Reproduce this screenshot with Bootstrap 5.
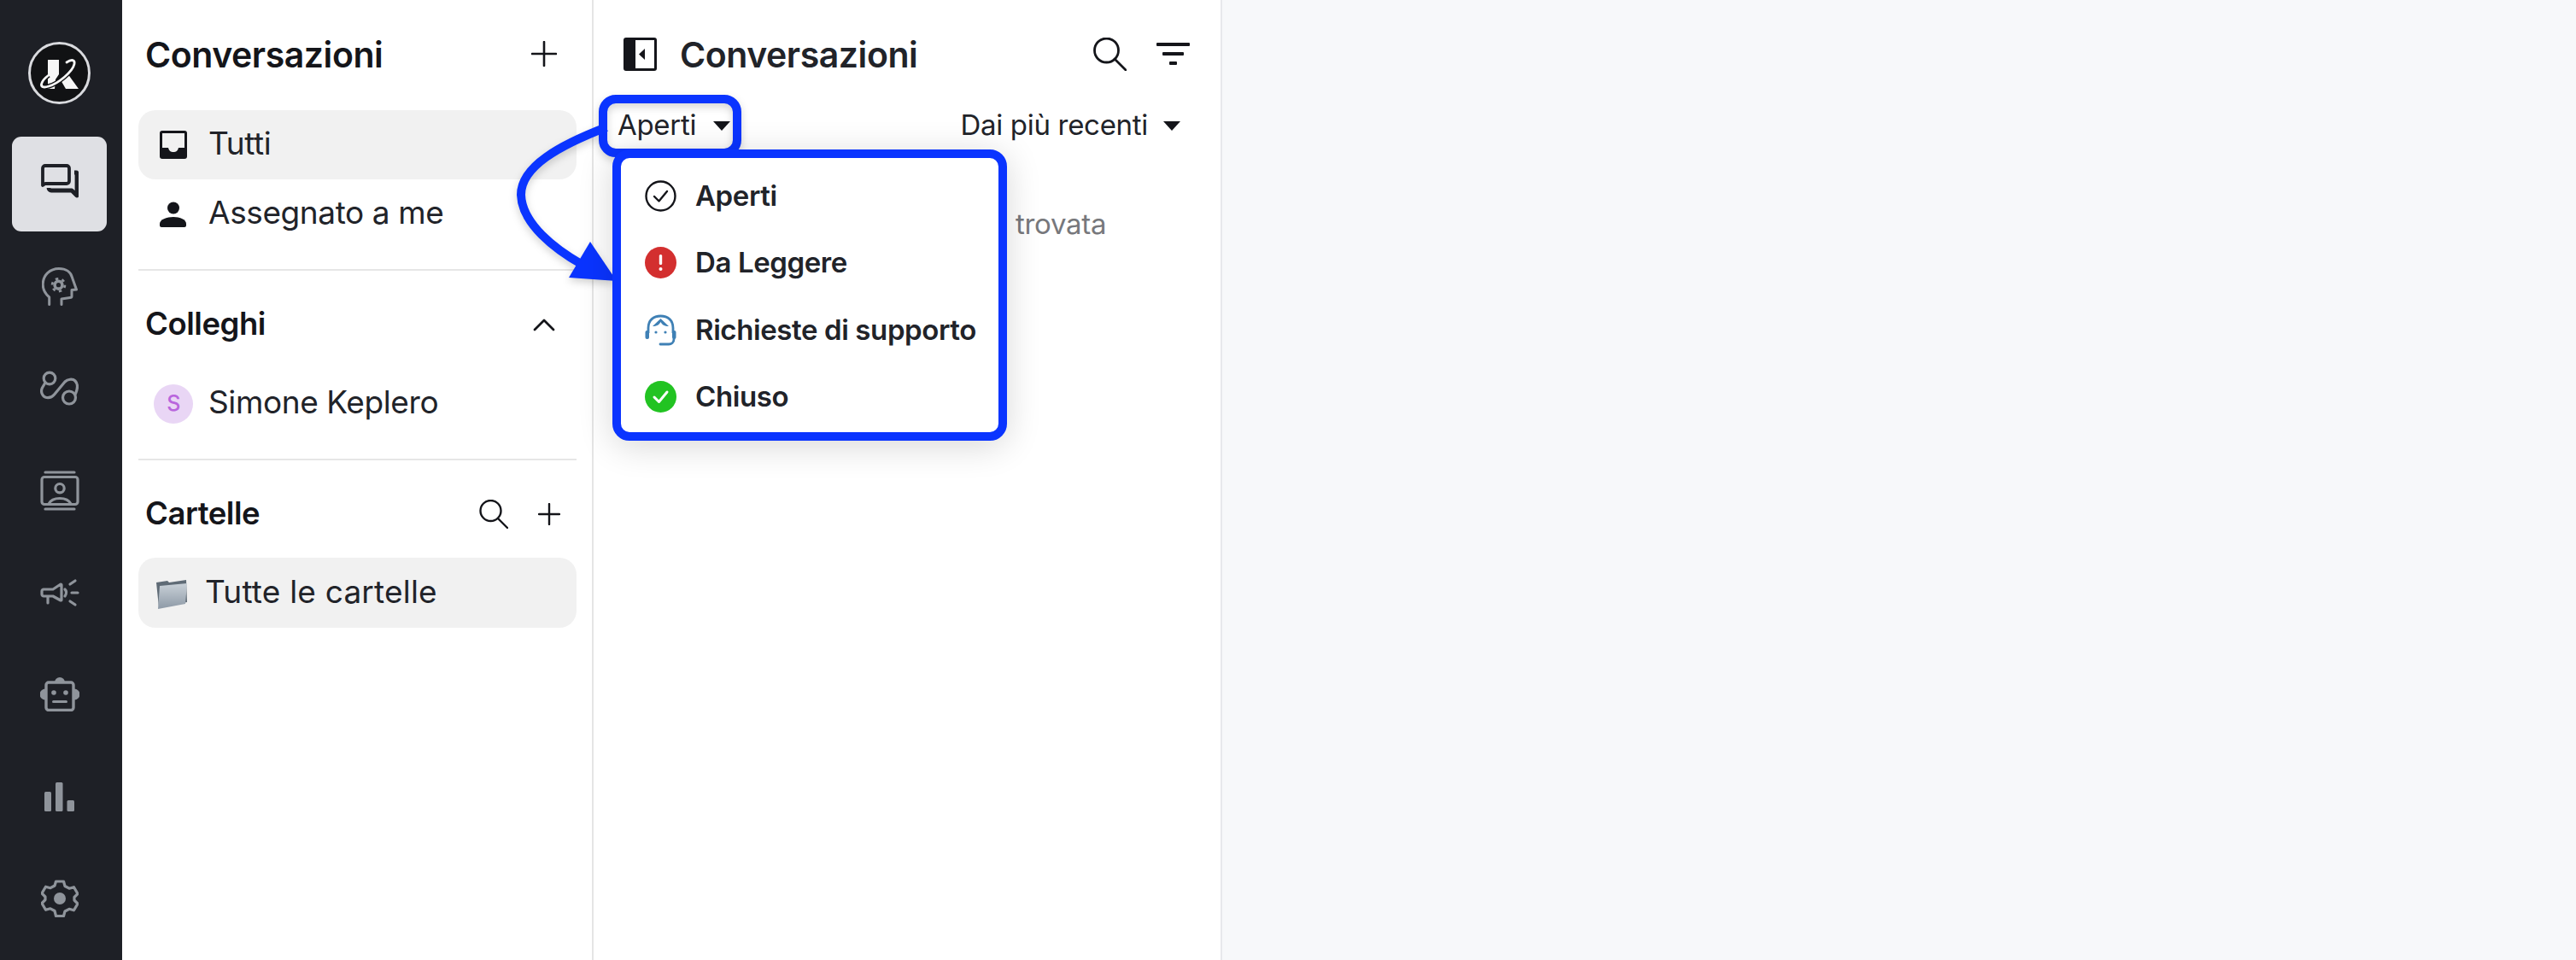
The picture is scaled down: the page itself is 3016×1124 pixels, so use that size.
<!DOCTYPE html>
<html lang="it">
<head>
<meta charset="utf-8">
<title>Conversazioni</title>
<link rel="stylesheet" href="https://cdn.jsdelivr.net/npm/bootstrap@5.3.0/dist/css/bootstrap.min.css">
<style>
html,body{height:100%;}
body{font-family:"Inter","Noto Sans",sans-serif;color:#212329;background:#fff;overflow:hidden;}
.app-shell{height:1124px;width:3016px;position:relative;}
.rail{width:143px;background:#1e2026;padding:49px 4px 0 0;flex:none;}
.rail-logo{width:73px;height:73px;margin-bottom:38px;display:block;}
.rail-btn{width:111px;height:111px;border-radius:11px;margin-bottom:8.5px;padding:0;border:0;background:transparent;color:#8f949b;display:flex;align-items:center;justify-content:center;flex:none;}
.rail-btn.on{background:#dfe0e4;color:#1e2026;}
.rail-btn.on svg{margin-bottom:6px;}
.side{width:552px;flex:none;padding:34px 18px 0 19px;border-right:2px solid #e5e5e5;}
.sec-head{height:58px;padding:0 23px 0 8px;}
.h-main{font-size:41px;font-weight:600;letter-spacing:-.45px;color:#14151a;margin:0;padding-top:2px;line-height:58px;}
.h-sec{font-size:36.5px;font-weight:600;letter-spacing:-.45px;color:#14151a;margin:0;padding-bottom:2px;line-height:56px;}
.side-row{height:81px;border-radius:20px;padding:0 0 0 25px;font-size:37px;letter-spacing:-.4px;color:#212329;gap:25px;}
.side-row > span:last-child{padding-bottom:3px;}
.side-row.sel{background:#f1f1f1;}
.side-row.folder-row{padding-left:20px;gap:21px;height:82px;letter-spacing:.2px;}
.side-div{height:2px;background:#e6e6e6;}
.avatar-s{width:46px;height:46px;border-radius:50%;background:#e9d6f5;color:#b966dd;font-size:25px;font-weight:500;margin-left:-7px;margin-right:-7px;}
.list-pane{width:736px;flex:none;padding:34px 0 0 29px;border-right:2px solid #e7e8ec;position:relative;}
.pane-title{font-weight:600;font-size:41px;letter-spacing:-.45px;color:#212329;padding-top:2px;line-height:58px;margin:0;}
.pane-head{height:58px;padding:0 36px 0 6px;}
.filter-row{height:58px;margin-top:26px;margin-left:-1px;padding-right:47px;font-size:33px;letter-spacing:-.3px;color:#212329;}
.caret-d{width:0;height:0;border-left:10px solid transparent;border-right:10px solid transparent;border-top:11px solid #14151a;display:inline-block;}
.empty-note{position:absolute;top:241px;left:494px;font-size:33px;letter-spacing:-.3px;line-height:42px;color:#77787c;}
.main-pane{background:#f7f8fa;}
.annot{position:absolute;left:0;top:0;pointer-events:none;filter:drop-shadow(0 4px 5px rgba(0,0,0,.18));}
.status-menu{display:block;position:absolute;left:717px;top:175px;width:462px;height:341px;border:10px solid #0a34ff;border-radius:20px;background:#fff;padding:5px 0 0;margin:0;box-shadow:0 6px 40px rgba(0,0,0,.16);min-width:0;}
.status-item{height:78.5px;padding:0 0 0 28px;gap:22px;font-size:33px;font-weight:600;letter-spacing:-.4px;color:#212329;}
</style>
</head>
<body>
<div class="app-shell d-flex">

  <nav class="rail d-flex flex-column align-items-center">
    <svg class="rail-logo" viewBox="0 0 73 73" aria-label="logo">
      <circle cx="36.500" cy="36.500" r="35" fill="#111214" stroke="#d9dade" stroke-width="3"/>
      <polygon points="23,21 36,21 36,38 32,44 31,55 23,55" fill="#f6f6f6"/>
      <polygon points="37,43 46,37 59,55 44,55" fill="#f6f6f6"/>
      <path d="M45 24c6-4 10-3 9 2-2 9-19 23-30 26-6 2-10 1-8-4 1-3 4-6 8-9" fill="none" stroke="#111214" stroke-width="5.500"/>
      <path d="M45 24c6-4 10-3 9 2-2 9-19 23-30 26-6 2-10 1-8-4 1-3 4-6 8-9" fill="none" stroke="#f6f6f6" stroke-width="2.800" stroke-linecap="round"/>
    </svg>

    <button class="rail-btn on btn" type="button" aria-label="Conversazioni">
      <svg width="44" height="41" viewBox="0 0 44 41" fill="none" stroke="currentColor"><path d="M2 25V5a3 3 0 0 1 3-3h25a3 3 0 0 1 3 3v15a3 3 0 0 1-3 3H5z" stroke-width="3.800" stroke-linejoin="round"/><path d="M39 10h2a1 1 0 0 1 1 1v26l-6-6H12a3 3 0 0 1-3-3" stroke-width="4.800" stroke-linejoin="round"/></svg>
    </button>
    <button class="rail-btn btn" type="button" aria-label="Base di conoscenza">
      <svg width="42" height="45" viewBox="0 0 42 45" fill="none" stroke="currentColor" stroke-width="3" stroke-linecap="round" stroke-linejoin="round"><path d="M8.700 43.500V35C4 31 1.200 26 1.200 20 1.200 9 9.500 1.500 20 1.500c8 0 14 4 15.500 10.500l5 14-5.500.5V34c0 1-1 1.500-2 1.500l-10 1.500v6.500"/><circle cx="19.500" cy="20.700" r="4.400" stroke-width="3.600"/><circle cx="19.500" cy="20.700" r="7.400" stroke-width="2.800" stroke-linecap="butt" stroke-dasharray="3.400 4.350"/></svg>
    </button>
    <button class="rail-btn btn" type="button" aria-label="Flussi">
      <svg width="45" height="41" viewBox="0 0 45 41" fill="none" stroke="currentColor" stroke-width="3.200" stroke-linecap="round" stroke-linejoin="round"><circle cx="11" cy="9" r="6.800"/><circle cx="34" cy="31.500" r="7.500"/><path d="M6 14L2.500 20c-2.500 5 .5 11 5 11.500 4 .500 7-1 9-3.500L29 13c3-3 9-4 12-1 3 3 3 9 .5 15"/></svg>
    </button>
    <button class="rail-btn btn" type="button" aria-label="Contatti">
      <svg width="46" height="47" viewBox="0 0 46 47" fill="none" stroke="currentColor" stroke-linecap="round" stroke-linejoin="round"><path d="M6 2h34M6 45h34" stroke-width="3.200"/><rect x="2" y="7.500" width="42" height="32" rx="3" stroke-width="3.200"/><circle cx="23" cy="20.700" r="5.200" stroke-width="3.200"/><path d="M10 39c2-4 7-6.500 13-6.500S34 35 36 39" stroke-width="3.200"/></svg>
    </button>
    <button class="rail-btn btn" type="button" aria-label="Campagne">
      <svg width="46" height="34" viewBox="0 0 46 34" fill="none" stroke="currentColor" stroke-width="3.200" stroke-linecap="round" stroke-linejoin="round"><path d="M2 15c0-1 1-2 2-2h11l9-6c.5 0 1 .5 1 1v17c0 .500-.500 1-1 1l-9-5H4c-1 0-2-1-2-2z"/><path d="M9 22v7M29 13c2 2 2 5 0 8" /><path d="M35 7l6-4M37 17h7M35 27l6 4"/></svg>
    </button>
    <button class="rail-btn btn" type="button" aria-label="Bot">
      <svg width="46" height="40" viewBox="0 0 46 40" fill="currentColor"><path d="M17 6a6 6 0 0 1 12 0z"/><path d="M6 13.500a6.500 6.500 0 0 0 0 13zM40 13.500a6.500 6.500 0 0 1 0 13z"/><rect x="7" y="6" width="32" height="32.500" rx="3" fill="none" stroke="currentColor" stroke-width="3.400"/><circle cx="16" cy="18" r="2.800"/><circle cx="30" cy="18" r="2.800"/><rect x="14" y="27" width="18" height="3" rx="1.500"/></svg>
    </button>
    <button class="rail-btn btn" type="button" aria-label="Statistiche">
      <svg width="35" height="34" viewBox="0 0 35 34" fill="currentColor"><rect x="0" y="11" width="8" height="23" rx="1.500"/><rect x="13" y="0" width="8.500" height="34" rx="1.500"/><rect x="26.500" y="21" width="8.500" height="13" rx="1.500"/></svg>
    </button>
    <button class="rail-btn btn" type="button" aria-label="Impostazioni">
      <svg width="44" height="44" viewBox="0 0 44 44" fill="none" stroke="currentColor" stroke-width="3.200" stroke-linejoin="round"><path d="M17.500 2h9l1.500 5.500 5 2.700 5.500-1.500 4.500 7.800-4 4v3.500l4 4-4.500 7.800-5.500-1.500-5 2.700-1.500 5.500h-9L16 36.500l-5-2.700-5.500 1.500L1 27.500l4-4V20l-4-4 4.500-7.800L11 9.700l5-2.700z"/><circle cx="22" cy="22" r="7" fill="currentColor" stroke="none"/></svg>
    </button>
  </nav>

  <aside class="side">
    <div class="sec-head d-flex align-items-center justify-content-between">
      <h1 class="h-main">Conversazioni</h1>
      <svg width="30" height="30" viewBox="0 0 30 30" stroke="#14151a" stroke-width="2.600" stroke-linecap="round"><path d="M15 1v28M1 15h28"/></svg>
    </div>
    <div class="nav flex-column" style="margin-top:37px">
      <a class="side-row sel d-flex align-items-center text-decoration-none">
        <svg width="32" height="33" viewBox="0 0 32 33"><path d="M3 0h26a3 3 0 0 1 3 3v27a3 3 0 0 1-3 3H3a3 3 0 0 1-3-3V3a3 3 0 0 1 3-3z" fill="#14151a"/><path d="M3 3h26v17h-7c-1 4-3 5-6 5s-5-1-6-5H3z" fill="#f1f1f1"/></svg>
        <span>Tutti</span>
      </a>
      <a class="side-row d-flex align-items-center text-decoration-none">
        <svg width="32" height="30" viewBox="0 0 32 30" fill="#14151a"><circle cx="16" cy="7.500" r="7"/><path d="M2 30c-1 0-2-1-2-2v-2c0-5 8-8 16-8s15 3 15 8v2c0 1-1 2-2 2z"/></svg>
        <span>Assegnato a me</span>
      </a>
    </div>
    <div class="side-div" style="margin-top:24px"></div>

    <div class="sec-head d-flex align-items-center justify-content-between" style="margin-top:34px">
      <h2 class="h-sec">Colleghi</h2>
      <svg width="26" height="16" viewBox="0 0 26 16" fill="none" stroke="#14151a" stroke-width="2.800" stroke-linecap="round" stroke-linejoin="round" style="margin-right:2px"><path d="M2 14L13 3l11 11"/></svg>
    </div>
    <a class="side-row d-flex align-items-center text-decoration-none" style="margin-top:23px">
      <span class="avatar-s d-flex align-items-center justify-content-center flex-none">S</span>
      <span>Simone Keplero</span>
    </a>
    <div class="side-div" style="margin-top:24px"></div>

    <div class="sec-head d-flex align-items-center justify-content-between" style="margin-top:34px;padding-right:19px">
      <h2 class="h-sec">Cartelle</h2>
      <div class="d-flex align-items-center" style="gap:35px">
        <svg width="34" height="34" viewBox="0 0 34 34" fill="none" stroke="#14151a" stroke-width="2.400" stroke-linecap="round"><circle cx="13.500" cy="13" r="12"/><path d="M22 22l11 11"/></svg>
        <svg width="26" height="26" viewBox="0 0 26 26" stroke="#14151a" stroke-width="2.400" stroke-linecap="round"><path d="M13 1v24M1 13h24"/></svg>
      </div>
    </div>
    <a class="side-row sel folder-row d-flex align-items-center text-decoration-none" style="margin-top:22px">
      <svg width="37" height="37" viewBox="0 0 37 37">
        <defs><linearGradient id="fold" x1="0" y1="0" x2="0" y2="1"><stop offset="0" stop-color="#c9d1d8"/><stop offset="1" stop-color="#8d99a6"/></linearGradient></defs>
        <path d="M1 6l13-2 2 2 20-3 1 26-33 6z" fill="#5f6b76"/>
        <path d="M5 10l32-3-2 24L3 37z" fill="url(#fold)"/>
      </svg>
      <span>Tutte le cartelle</span>
    </a>
  </aside>

  <section class="list-pane">
    <div class="pane-head d-flex align-items-center justify-content-between">
      <div class="d-flex align-items-center" style="gap:27px">
        <svg width="39" height="39" viewBox="0 0 39 39"><rect width="39" height="39" rx="3" fill="#14151a"/><rect x="14" y="3" width="22" height="33" fill="#fff"/><path d="M25 13v13l-7-6.500z" fill="#14151a"/></svg>
        <h2 class="pane-title">Conversazioni</h2>
      </div>
      <div class="d-flex align-items-center" style="gap:35px">
        <svg width="39" height="39" viewBox="0 0 39 39" fill="none" stroke="#14151a" stroke-width="2.800" stroke-linecap="round"><circle cx="15.500" cy="15" r="14"/><path d="M25 25l13 13"/></svg>
        <svg width="39" height="26" viewBox="0 0 39 26" fill="#14151a"><rect width="39" height="4" rx="1"/><rect x="7" y="11" width="25" height="4" rx="1"/><rect x="15" y="22" width="9" height="4" rx="1"/></svg>
      </div>
    </div>
    <div class="filter-row d-flex align-items-center justify-content-between">
      <div class="d-flex align-items-center" style="gap:20px"><span>Aperti</span><i class="caret-d"></i></div>
      <div class="d-flex align-items-center" style="gap:18px"><span>Dai più recenti</span><i class="caret-d"></i></div>
    </div>
    <p class="empty-note mb-0">trovata</p>
  </section>

  <div class="main-pane flex-grow-1"></div>

  <svg class="annot" width="3016" height="1124" viewBox="0 0 3016 1124" fill="none">
    <path d="M710 149C655 170 610 195 610 228C611 262 650 292 682 310" stroke="#0a34ff" stroke-width="10"/>
    <polygon points="691,283 666,325 722,329" fill="#0a34ff"/>
    <rect x="706" y="116" width="157" height="63" rx="15" stroke="#0a34ff" stroke-width="10"/>
  </svg>

  <div class="status-menu dropdown-menu show">
    <a class="status-item dropdown-item d-flex align-items-center">
      <svg width="37" height="37" viewBox="0 0 37 37" fill="none" stroke="#14151a" stroke-width="2.400" stroke-linecap="round" stroke-linejoin="round"><circle cx="18.500" cy="18.500" r="17"/><path d="M11 19l5.500 5.500L26 13"/></svg>
      <span>Aperti</span>
    </a>
    <a class="status-item dropdown-item d-flex align-items-center">
      <svg width="37" height="37" viewBox="0 0 37 37"><circle cx="18.500" cy="18.500" r="18.500" fill="#d32f2f"/><rect x="16.800" y="9" width="3.400" height="12" rx="1.500" fill="#fff"/><circle cx="18.500" cy="26" r="2" fill="#fff"/></svg>
      <span>Da Leggere</span>
    </a>
    <a class="status-item dropdown-item d-flex align-items-center">
      <svg width="37" height="37" viewBox="0 0 37 37" fill="none" stroke="#3f80b5"><path d="M4 22v-6C4 7 10 2 18.500 2S33 7 33 16v6" stroke-width="2.800"/><rect x="0.500" y="19" width="4.500" height="10" rx="2" fill="#3f80b5" stroke="none"/><rect x="32" y="19" width="4.500" height="10" rx="2" fill="#3f80b5" stroke="none"/><path d="M9 14c5 0 8-2 9.500-5 1.500 3 4.500 5 9.500 5l-9.500-9z" stroke="none" fill="#3f80b5"/><circle cx="13" cy="21" r="1.600" fill="#3f80b5" stroke="none"/><circle cx="24" cy="21" r="1.600" fill="#3f80b5" stroke="none"/><path d="M34 29c0 4-3 6-6 6H18" stroke-width="2.800" stroke-linecap="round"/></svg>
      <span>Richieste di supporto</span>
    </a>
    <a class="status-item dropdown-item d-flex align-items-center">
      <svg width="37" height="37" viewBox="0 0 37 37" fill="none"><circle cx="18.500" cy="18.500" r="18.500" fill="#22c322"/><path d="M11 19l5.500 5.500L26 13" stroke="#fff" stroke-width="3" stroke-linecap="round" stroke-linejoin="round"/></svg>
      <span>Chiuso</span>
    </a>
  </div>
</div>
<script src="https://cdn.jsdelivr.net/npm/bootstrap@5.3.0/dist/js/bootstrap.bundle.min.js"></script>
</body>
</html>
